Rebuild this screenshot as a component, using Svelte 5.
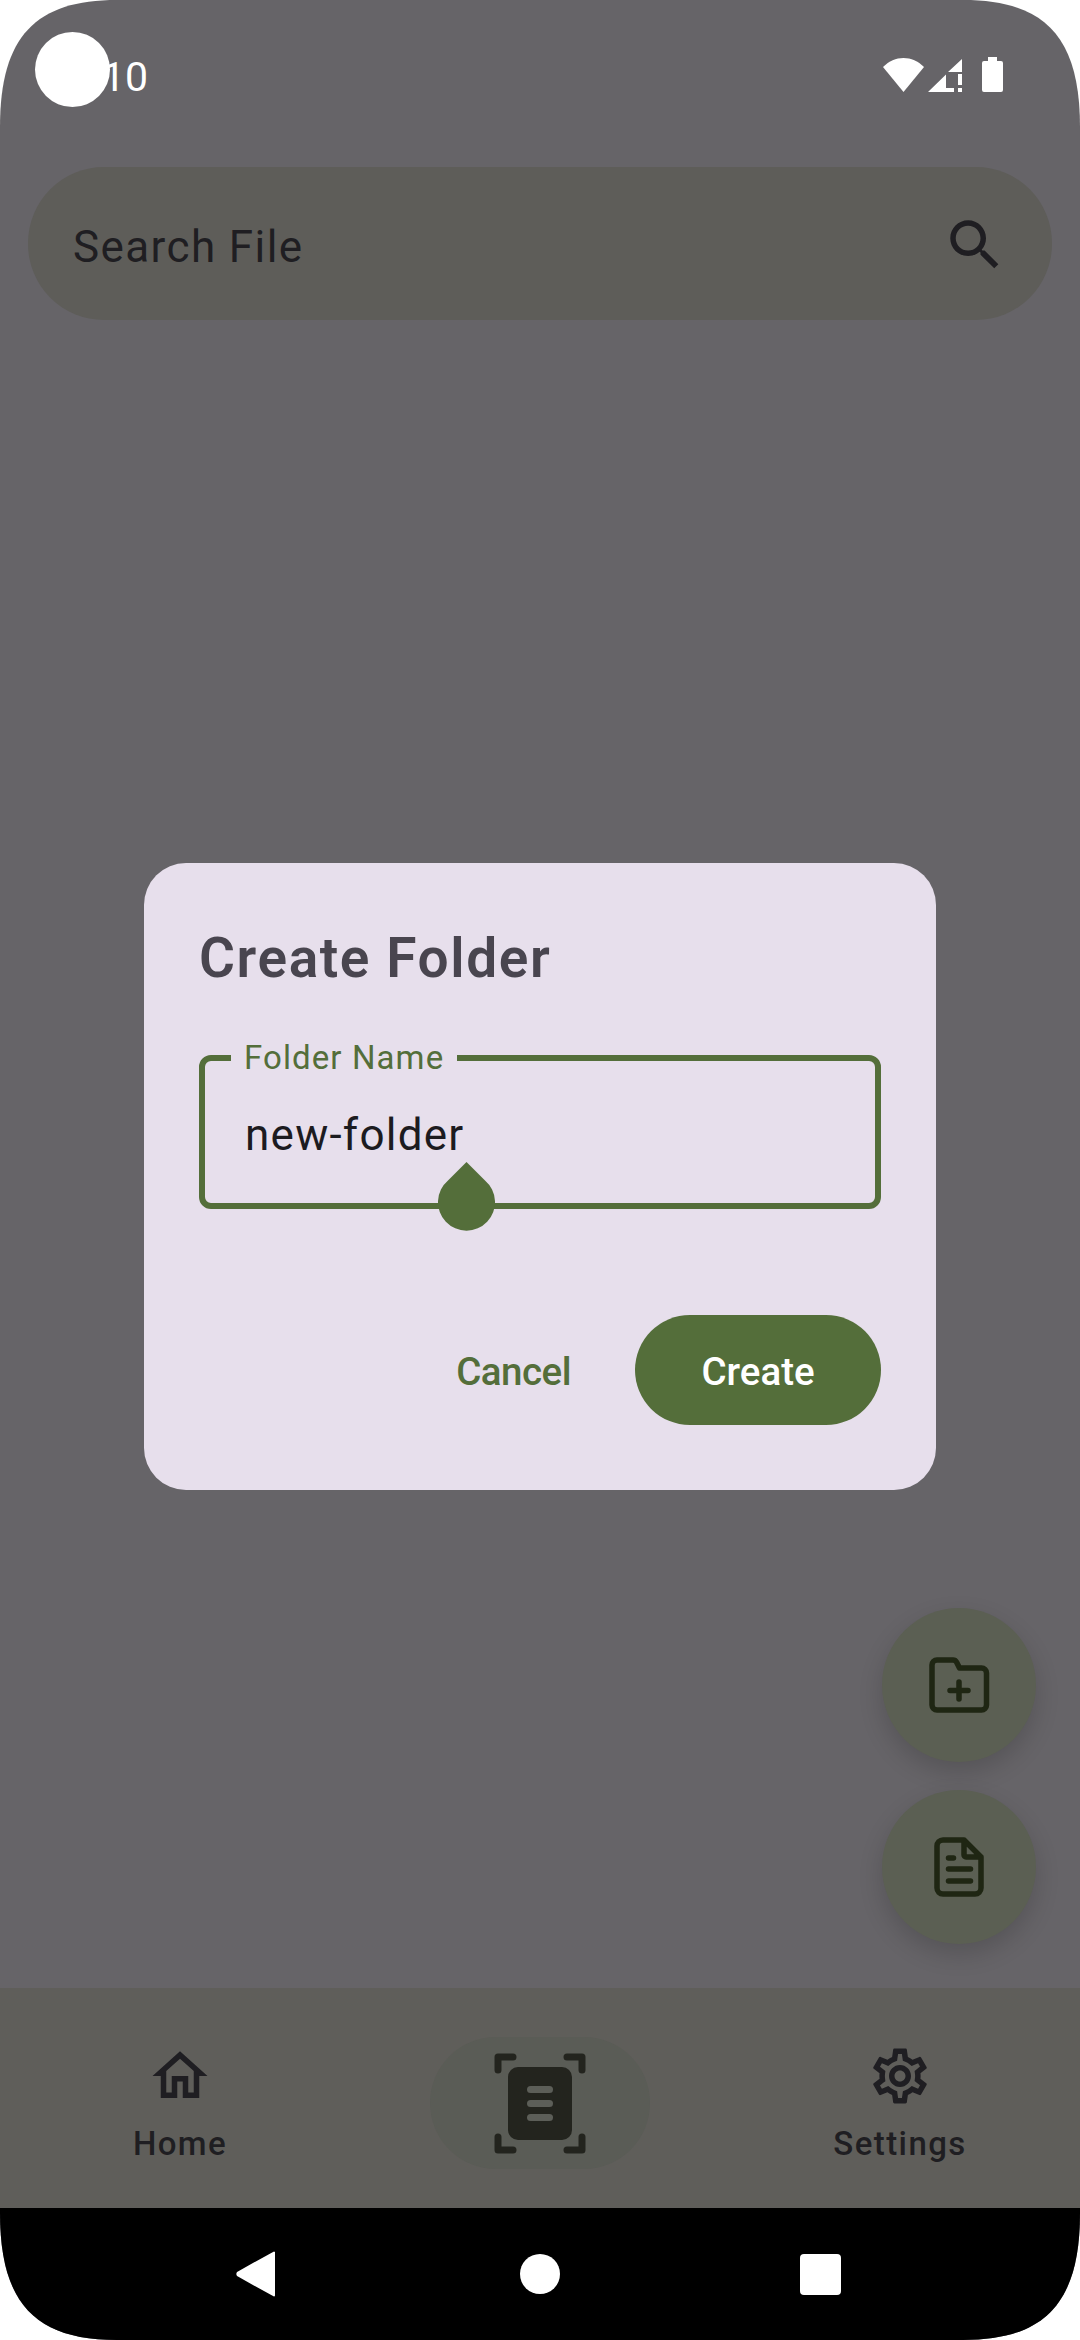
<script>
    const title = 'Create Folder';
    const fieldLabel = 'Folder Name';
    let folderName = $state('new-folder');
</script>

<div class="phone">
    <div class="status">
        <div class="clock">
            <span class="time">10</span>
            <span class="camera"></span>
        </div>
        <div class="status-icons">
            <svg class="wifi" width="41" height="34" viewBox="0 0 41 34"><path d="M0 9C6 3 13 0 20.5 0S35 3 41 9L20.5 34z" fill="#fff"/></svg>
            <svg class="signal" width="34" height="33" viewBox="0 0 34 33" fill="#fff"><path d="M34 0v13H20zM18 15.500V29h8v4H0z"/><rect x="30" y="15" width="4" height="11"/><rect x="30" y="29" width="4" height="4"/></svg>
            <svg class="battery" width="21" height="35" viewBox="0 0 21 35"><path d="M6 4V0h9v4h4a2 2 0 0 1 2 2v27a2 2 0 0 1-2 2H2a2 2 0 0 1-2-2V6a2 2 0 0 1 2-2z" fill="#fff"/></svg>
        </div>
    </div>

    <div class="search">
        <span class="search-text">Search File</span>
        <svg class="search-icon" width="66" height="66" viewBox="0 0 24 24"><path fill="#1f1e22" d="M15.500 14h-.79l-.28-.27C15.410 12.590 16 11.110 16 9.500 16 5.910 13.090 3 9.500 3S3 5.910 3 9.500 5.910 16 9.500 16c1.610 0 3.090-.59 4.230-1.570l.27.28v.79l5 4.990L20.490 19l-4.990-5zm-6 0C7.010 14 5 11.990 5 9.500S7.010 5 9.500 5 14 7.010 14 9.500 11.990 14 9.500 14z"/></svg>
    </div>

    <div class="content"></div>

    <nav class="bottom">
        <div class="tab">
            <svg width="66" height="66" viewBox="0 0 24 24"><path fill="#1f1e22" d="M12 5.690l5 4.500V18h-2v-6H9v6H7v-7.810l5-4.500M12 3L2 12h3v8h6v-6h2v6h6v-8h3L12 3z"/></svg>
            <span>Home</span>
        </div>
        <div class="scan">
            <svg width="92" height="101" viewBox="0 0 92 101">
                <g fill="none" stroke="#23241e" stroke-width="7" stroke-linecap="round" stroke-linejoin="round">
                    <path d="M4 17V4h15M73 4h15v13M4 84v13h15M73 97h15V84"/>
                </g>
                <rect x="14" y="14" width="64" height="73" rx="10" fill="#23241e"/>
                <g fill="#5c5e58">
                    <rect x="33" y="33" width="26" height="7" rx="3.500"/>
                    <rect x="33" y="47" width="26" height="7" rx="3.500"/>
                    <rect x="33" y="61" width="26" height="7" rx="3.500"/>
                </g>
            </svg>
        </div>
        <div class="tab">
            <svg width="66" height="66" viewBox="0 0 24 24"><path fill="#1f1e22" d="M19.430 12.980c.04-.32.070-.64.070-.98s-.03-.66-.07-.98l2.110-1.650c.19-.15.240-.42.120-.64l-2-3.460c-.12-.22-.39-.3-.61-.22l-2.490 1c-.52-.4-1.080-.73-1.690-.98l-.38-2.650C14.460 2.180 14.250 2 14 2h-4c-.25 0-.46.180-.49.420l-.38 2.650c-.61.250-1.170.590-1.690.98l-2.490-1c-.23-.09-.49 0-.61.220l-2 3.460c-.13.220-.07.490.12.640l2.110 1.650c-.04.320-.07.650-.07.980s.03.660.07.980l-2.110 1.650c-.19.150-.24.420-.12.640l2 3.460c.12.220.39.300.61.220l2.490-1c.52.400 1.080.730 1.690.980l.38 2.650c.03.240.24.420.49.420h4c.25 0 .46-.18.49-.42l.38-2.650c.61-.25 1.170-.59 1.690-.98l2.490 1c.23.090.49 0 .61-.22l2-3.460c.12-.22.07-.49-.12-.64l-2.110-1.650zM17.450 11.270c.04.310.05.520.05.730s-.02.430-.05.730l-.14 1.130.89.700 1.080.840-.7 1.210-1.270-.51-1.040-.42-.9.680c-.43.320-.84.560-1.250.730l-1.060.430-.16 1.130-.2 1.350h-1.400l-.19-1.350-.16-1.130-1.060-.43c-.43-.18-.83-.41-1.230-.71l-.91-.7-1.060.43-1.270.51-.7-1.210 1.080-.84.890-.7-.14-1.130c-.03-.31-.05-.54-.05-.74s.02-.43.05-.73l.14-1.130-.89-.7-1.080-.84.7-1.210 1.270.51 1.040.42.900-.68c.43-.32.840-.56 1.250-.73l1.060-.43.160-1.130.2-1.350h1.390l.19 1.350.16 1.130 1.060.43c.43.180.83.410 1.230.71l.91.700 1.060-.43 1.270-.51.7 1.210-1.070.85-.89.700.14 1.130zM12 8c-2.210 0-4 1.790-4 4s1.790 4 4 4 4-1.790 4-4-1.790-4-4-4zm0 6c-1.100 0-2-.9-2-2s.9-2 2-2 2 .9 2 2-.9 2-2 2z"/></svg>
            <span>Settings</span>
        </div>
    </nav>

    <div class="sysnav">
        <svg width="40" height="46" viewBox="0 0 40 46"><path d="M38 1.500v43L2 24.500a2 2 0 0 1 0-3z" fill="#fff" stroke="#fff" stroke-linejoin="round" stroke-width="2"/></svg>
        <span class="home-dot"></span>
        <span class="square"></span>
    </div>

    <div class="fabs">
        <button class="fab" aria-label="New folder">
            <svg width="61" height="56" viewBox="0 0 61 56" fill="none" stroke="#1f2613" stroke-width="5.5" stroke-linecap="round" stroke-linejoin="round"><path d="M3 8a5 5 0 0 1 5-5h16a4 4 0 0 1 3.500 2l3 6h22a5 5 0 0 1 5 5v32a5 5 0 0 1-5 5H8a5 5 0 0 1-5-5zM30 25v17M21 33.500h18"/></svg>
        </button>
        <button class="fab" aria-label="New file">
            <svg width="50" height="60" viewBox="0 0 50 60" fill="none" stroke="#1f2613" stroke-width="5.5" stroke-linecap="round" stroke-linejoin="round"><path d="M30 3H9a6 6 0 0 0-6 6v42a6 6 0 0 0 6 6h32a6 6 0 0 0 6-6V20zM30 3v15a2 2 0 0 0 2 2h15M14.500 21h5M14.500 32h22M14.500 44h22"/></svg>
        </button>
    </div>

    <div class="dialog-wrap">
        <div class="dialog">
            <h2>{title}</h2>
            <div class="field">
                <span class="field-label">{fieldLabel}</span>
                <span class="field-value">{folderName}</span>
                <svg class="handle" width="57" height="70" viewBox="0 0 57 70"><path d="M28.500 0L47 18.500A28.500 28.500 0 1 1 10 18.500z" fill="#546e3a"/></svg>
            </div>
            <div class="actions">
                <button class="cancel">Cancel</button>
                <button class="create">Create</button>
            </div>
        </div>
    </div>
</div>

<style>
    :global(body) {
        margin: 0;
        background: #fff;
    }

    .phone {
        position: relative;
        width: 1080px;
        height: 2340px;
        display: flex;
        flex-direction: column;
        overflow: hidden;
        background: #666468;
        clip-path: path('M0 127C0 36 36 0 117 0H963C1044 0 1080 36 1080 127V2213C1080 2304 1044 2340 963 2340H117C36 2340 0 2304 0 2213Z');
        font-family: Roboto, sans-serif;
    }

    .status {
        height: 167px;
        flex: none;
        box-sizing: border-box;
        padding: 32px 77px 0 35px;
        display: flex;
        justify-content: space-between;
        align-items: flex-start;
        color: #fff;
    }

    .clock {
        position: relative;
        width: 120px;
        height: 75px;
    }

    .camera {
        position: absolute;
        left: 0;
        top: 0;
        width: 75px;
        height: 75px;
        border-radius: 50%;
        background: #fff;
    }

    .time {
        position: absolute;
        left: 67px;
        top: 21px;
        font-size: 41px;
        line-height: 48px;
    }

    .status-icons {
        display: flex;
        align-items: flex-start;
        gap: 4px;
        padding-top: 25px;
    }

    .wifi {
        margin-top: 1px;
    }

    .signal {
        margin-top: 2px;
    }

    .battery {
        margin-left: 16px;
    }

    .search {
        flex: none;
        height: 153px;
        margin: 0 28px;
        padding: 0 44px 0 45px;
        display: flex;
        align-items: center;
        justify-content: space-between;
        background: #5e5d59;
        border-radius: 76px;
    }

    .search-text {
        padding-top: 6px;
        font-size: 44px;
        letter-spacing: 1.4px;
        color: #1f1e22;
    }

    .search-icon {
        margin-top: 2px;
    }

    .content {
        flex: 1;
    }

    .bottom {
        flex: none;
        height: 220px;
        box-sizing: border-box;
        padding: 49px 0 0;
        display: flex;
        align-items: flex-start;
        justify-content: space-between;
        background: #5f5e5a;
    }

    .tab {
        width: 360px;
        padding-top: 6px;
        display: flex;
        flex-direction: column;
        align-items: center;
        gap: 13px;
        font-size: 33px;
        font-weight: 500;
        letter-spacing: 1.4px;
        line-height: 44px;
        color: #1f1e22;
    }

    .scan {
        width: 220px;
        height: 132px;
        display: flex;
        align-items: center;
        justify-content: center;
        background: #5a5c56;
        border-radius: 66px;
    }

    .sysnav {
        flex: none;
        height: 132px;
        box-sizing: border-box;
        padding: 0 239px 0 236px;
        display: flex;
        align-items: center;
        justify-content: space-between;
        background: #000;
    }

    .home-dot {
        width: 40px;
        height: 40px;
        margin-left: 4px;
        border-radius: 50%;
        background: #fff;
    }

    .square {
        width: 41px;
        height: 41px;
        border-radius: 4px;
        background: #fff;
    }

    .fabs {
        position: absolute;
        right: 44px;
        top: 1608px;
        display: flex;
        flex-direction: column;
        gap: 28px;
    }

    .fab {
        width: 154px;
        height: 154px;
        padding: 0;
        border: none;
        border-radius: 50%;
        display: flex;
        align-items: center;
        justify-content: center;
        background: #5b5f53;
        box-shadow: 0 10px 24px rgba(0, 0, 0, 0.16);
    }

    .dialog-wrap {
        position: absolute;
        left: 0;
        top: 0;
        width: 100%;
        padding-top: 863px;
        display: flex;
        justify-content: center;
    }

    .dialog {
        width: 792px;
        height: 627px;
        box-sizing: border-box;
        padding: 59px 55px 0;
        background: #e7dfec;
        border-radius: 42px;
    }

    h2 {
        margin: 0;
        font-size: 55px;
        line-height: 72px;
        font-weight: 600;
        letter-spacing: 1.6px;
        color: #49454f;
    }

    .field {
        position: relative;
        height: 154px;
        box-sizing: border-box;
        margin-top: 61px;
        padding: 48px 40px 0;
        border: 6px solid #546e3a;
        border-radius: 12px;
    }

    .field-label {
        position: absolute;
        left: 26px;
        top: -23px;
        padding: 0 13px;
        font-size: 33px;
        line-height: 40px;
        letter-spacing: 1.1px;
        color: #546e3a;
        background: #e7dfec;
    }

    .field-value {
        font-size: 44px;
        line-height: 52px;
        letter-spacing: 1.25px;
        color: #1c1b1f;
    }

    .handle {
        position: absolute;
        left: 233px;
        top: 101px;
    }

    .actions {
        margin-top: 106px;
        display: flex;
        justify-content: flex-end;
        align-items: center;
        gap: 64px;
    }

    button {
        font-family: Roboto, sans-serif;
    }

    .cancel,
    .create {
        border: none;
        padding: 2px 0 0;
        font-size: 38.5px;
        font-weight: 500;
    }

    .cancel {
        background: none;
        color: #546e3a;
        letter-spacing: -0.5px;
    }

    .create {
        width: 246px;
        height: 110px;
        border-radius: 55px;
        background: #546e3a;
        color: #fff;
    }
</style>
